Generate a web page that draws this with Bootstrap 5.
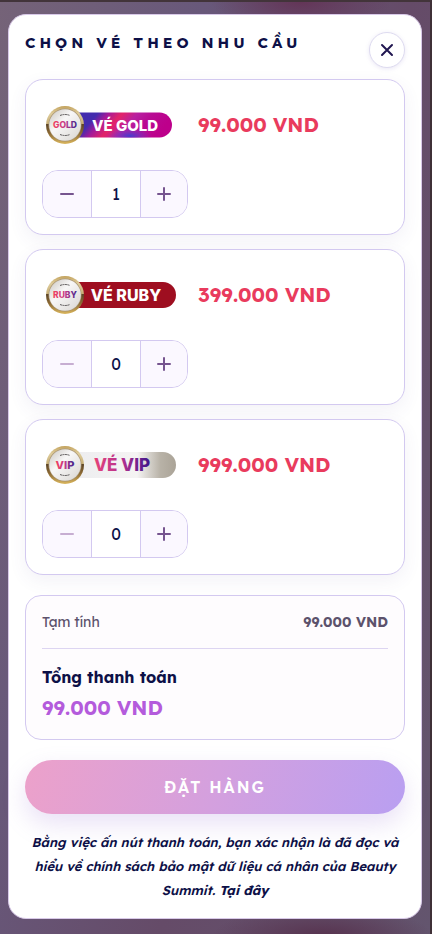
<!DOCTYPE html>
<html lang="vi">
<head>
<meta charset="utf-8">
<meta name="viewport" content="width=device-width, initial-scale=1">
<title>Chọn vé theo nhu cầu</title>
<link href="https://cdn.jsdelivr.net/npm/bootstrap@5.3.0/dist/css/bootstrap.min.css" rel="stylesheet">
<style>
:root { --navy: #0d1047; --line: #d3c9f0; --plum: #76558f; }
body {
  font-family: Lexend, Inter, "Noto Sans", sans-serif; color: var(--navy);
  background: linear-gradient(105deg, #756378 0%, #68587a 30%, #654b68 60%, #63556e 100%);
  border-top: 2px solid #42343a; border-right: 2px solid #3f3037;
}
.backdrop { padding: 12px 8px 15px; background: radial-gradient(ellipse 90px 30px at 70% 0, #633557, transparent), radial-gradient(ellipse 110px 30px at 75% 100%, #57334f, transparent); }
.sheet { background: #fff; border: 1px solid #d8c9e8; border-radius: 18px; padding: 16px; }
.sheet-head { height: 48px; }
.sheet-title { font-size: 15px; line-height: 24px; font-weight: 700; letter-spacing: 4px; }
.close-btn { width: 36px; height: 36px; margin-top: 1px; border: 1px solid #dedbf0; background: #fff; box-shadow: 0 1px 4px #8c78c82e; }
.tickets { gap: 14px; }
.ticket { border: 1px solid var(--line); border-radius: 18px; background: #fff; box-shadow: 0 6px 18px #5a468c12; }
.ticket-art { width: 140px; height: 58px; flex: none; }
.ticket-art text { font-family: Inter, sans-serif; font-weight: 800; text-anchor: middle; }
.price { font-size: 20px; line-height: 28px; font-weight: 700; color: #e93b5d; }
.qty { width: 146px; height: 48px; border: 1px solid var(--line); border-radius: 16px; overflow: hidden; }
.qty button, .qty button:disabled { background: #fbf8ff; color: var(--plum); flex: 1 1 0; opacity: 1; }
.qty button:first-child { flex: 0 0 48px; }
.qty button:disabled { color: #c7aed2; }
.qty svg { display: block; margin: 0 auto; }
.qty input { width: 50px; border: 0; border-left: 1px solid var(--line); border-right: 1px solid var(--line); color: var(--navy); font-size: 16px; background: #fff; }
.summary { margin-top: 20px; border: 1px solid var(--line); border-radius: 16px; background: #fefcfe; padding: 14px 16px 17px; }
.subtotal { font-size: 14px; line-height: 24px; color: #5c526c; padding-bottom: 14px; border-bottom: 1px solid #ddd5f2; }
.total-label { font-size: 16px; line-height: 26px; margin-top: 15px; }
.total-value { font-size: 20px; line-height: 28px; margin-top: 4px; color: #b45bdc; }
.order-btn { height: 54px; margin-top: 20px; color: #fff; font-size: 16px; font-weight: 600; letter-spacing: 2px; background: linear-gradient(105deg, #eca1ca, #d4a0de 50%, #b99ff1); box-shadow: 0 10px 24px #9a78d638; }
.terms { font-size: 13px; line-height: 24px; margin-top: 16px; font-style: italic; font-weight: 600; }
.terms a { color: inherit; font-weight: 700; }
</style>
<script src="https://cdn.jsdelivr.net/npm/bootstrap@5.3.0/dist/js/bootstrap.bundle.min.js"></script>
</head>
<body>
<svg width="0" height="0" class="position-absolute" aria-hidden="true">
  <defs>
    <linearGradient id="rim" x1="0" y1="0" x2="0" y2="1"><stop offset="0" stop-color="#c3a25c"/><stop offset=".2" stop-color="#dfcd9c"/><stop offset=".46" stop-color="#c8b078"/><stop offset=".48" stop-color="#5d4526"/><stop offset=".72" stop-color="#8c6a34"/><stop offset="1" stop-color="#dcb85f"/></linearGradient>
    <linearGradient id="face" x1="0" y1="0" x2="1" y2="1"><stop offset="0" stop-color="#c9c5bf"/><stop offset=".4" stop-color="#f8f7f7"/><stop offset="1" stop-color="#d8d5d1"/></linearGradient>
    <linearGradient id="ink"><stop offset="0" stop-color="#f43f5e"/><stop offset=".5" stop-color="#c4398a"/><stop offset="1" stop-color="#3d238b"/></linearGradient>
    <linearGradient id="vipInk"><stop offset="0" stop-color="#e64379"/><stop offset=".5" stop-color="#b53190"/><stop offset="1" stop-color="#3c168b"/></linearGradient>
    <linearGradient id="goldBar" x2="1" y2=".2"><stop offset=".3" stop-color="#432cae"/><stop offset=".4" stop-color="#a51a98"/><stop offset=".52" stop-color="#e32368"/><stop offset=".66" stop-color="#b820a0"/><stop offset=".8" stop-color="#b80b93"/><stop offset="1" stop-color="#bd008b"/></linearGradient>
    <radialGradient id="goldGlow"><stop offset="0" stop-color="#483acc"/><stop offset="1" stop-color="#783acc" stop-opacity="0"/></radialGradient>
    <clipPath id="goldClip"><path d="M23 16.500h94.500a12.500 12.500 0 0 1 0 25H23z"/></clipPath>
    <linearGradient id="vipBar"><stop offset="0" stop-color="#ececef"/><stop offset=".65" stop-color="#f5f4f3"/><stop offset=".86" stop-color="#b8b2a7"/><stop offset="1" stop-color="#aaa397"/></linearGradient>
    <g id="medal">
      <circle cx="23" cy="29" r="19" fill="url(#rim)"/>
      <circle cx="23" cy="29" r="16.500" fill="#a99574"/>
      <circle cx="23" cy="29" r="15.800" fill="url(#face)"/>
      <path d="M18 19.500q5-2 10 0M18 38.500q5 2 10 0" fill="none" stroke="#4b4748" stroke-width=".9" stroke-dasharray="2 .5"/>
    </g>
  </defs>
</svg>
<div class="backdrop min-vh-100">
<main class="sheet">
  <header class="sheet-head d-flex justify-content-between align-items-start">
    <h1 class="sheet-title text-uppercase mb-0">Chọn vé theo nhu cầu</h1>
    <button type="button" class="close-btn btn rounded-circle p-0 d-flex align-items-center justify-content-center" aria-label="Đóng">
      <svg width="16" height="16" viewBox="0 0 16 16" fill="none" stroke="#211751" stroke-width="2" stroke-linecap="round"><path d="M3 3l10 10M13 3L3 13"/></svg>
    </button>
  </header>

  <div class="tickets d-flex flex-column">
    <section class="ticket p-3">
      <div class="d-flex align-items-center gap-3 mb-3">
        <svg class="ticket-art" viewBox="0 0 140 58" role="img" aria-label="Vé Gold">
          <path d="M23 16.500h94.500a12.500 12.500 0 0 1 0 25H23z" fill="url(#goldBar)"/>
          <ellipse cx="88" cy="40" rx="22" ry="9" fill="url(#goldGlow)" clip-path="url(#goldClip)"/>
          <use href="#medal"/>
          <text x="23" y="32" font-size="8.500" fill="url(#ink)">GOLD</text>
          <text x="83" y="35" font-size="15" fill="#fff">VÉ GOLD</text>
        </svg>
        <div class="price">99.000 VND</div>
      </div>
      <div class="qty d-flex">
        <button type="button" class="btn border-0 rounded-0 p-0" aria-label="Giảm vé Gold"><svg width="16" height="16" viewBox="0 0 16 16" stroke="currentColor" stroke-width="2" stroke-linecap="round"><path d="M2 8h12"/></svg></button>
        <input type="text" inputmode="numeric" class="text-center p-0" value="1" aria-label="Số lượng vé Gold">
        <button type="button" class="btn border-0 rounded-0 p-0" aria-label="Tăng vé Gold"><svg width="16" height="16" viewBox="0 0 16 16" stroke="currentColor" stroke-width="2" stroke-linecap="round"><path d="M2 8h12M8 2v12"/></svg></button>
      </div>
    </section>

    <section class="ticket p-3">
      <div class="d-flex align-items-center gap-3 mb-3">
        <svg class="ticket-art" viewBox="0 0 140 58" role="img" aria-label="Vé Ruby">
          <path d="M23 16h98a13 13 0 0 1 0 26H23z" fill="#9e0e20"/>
          <use href="#medal"/>
          <text x="23" y="32" font-size="8.500" fill="url(#ink)">RUBY</text>
          <text x="84" y="35" font-size="16" fill="#fff">VÉ RUBY</text>
        </svg>
        <div class="price">399.000 VND</div>
      </div>
      <div class="qty d-flex">
        <button type="button" class="btn border-0 rounded-0 p-0" aria-label="Giảm vé Ruby" disabled><svg width="16" height="16" viewBox="0 0 16 16" stroke="currentColor" stroke-width="2" stroke-linecap="round"><path d="M2 8h12"/></svg></button>
        <input type="text" inputmode="numeric" class="text-center p-0" value="0" aria-label="Số lượng vé Ruby">
        <button type="button" class="btn border-0 rounded-0 p-0" aria-label="Tăng vé Ruby"><svg width="16" height="16" viewBox="0 0 16 16" stroke="currentColor" stroke-width="2" stroke-linecap="round"><path d="M2 8h12M8 2v12"/></svg></button>
      </div>
    </section>

    <section class="ticket p-3">
      <div class="d-flex align-items-center gap-3 mb-3">
        <svg class="ticket-art" viewBox="0 0 140 58" role="img" aria-label="Vé VIP">
          <path d="M23 16h98a13 13 0 0 1 0 26H23z" fill="url(#vipBar)"/>
          <use href="#medal"/>
          <text x="23" y="33" font-size="11" fill="url(#ink)">VIP</text>
          <text x="80" y="35" font-size="17" fill="url(#vipInk)">VÉ VIP</text>
        </svg>
        <div class="price">999.000 VND</div>
      </div>
      <div class="qty d-flex">
        <button type="button" class="btn border-0 rounded-0 p-0" aria-label="Giảm vé VIP" disabled><svg width="16" height="16" viewBox="0 0 16 16" stroke="currentColor" stroke-width="2" stroke-linecap="round"><path d="M2 8h12"/></svg></button>
        <input type="text" inputmode="numeric" class="text-center p-0" value="0" aria-label="Số lượng vé VIP">
        <button type="button" class="btn border-0 rounded-0 p-0" aria-label="Tăng vé VIP"><svg width="16" height="16" viewBox="0 0 16 16" stroke="currentColor" stroke-width="2" stroke-linecap="round"><path d="M2 8h12M8 2v12"/></svg></button>
      </div>
    </section>
  </div>

  <section class="summary">
    <div class="subtotal d-flex justify-content-between"><span>Tạm tính</span><strong>99.000 VND</strong></div>
    <div class="total-label fw-bold">Tổng thanh toán</div>
    <div class="total-value fw-bold">99.000 VND</div>
  </section>

  <button type="button" class="order-btn btn w-100 border-0 rounded-pill text-uppercase">Đặt hàng</button>
  <p class="terms text-center mb-0">Bằng việc ấn nút thanh toán, bạn xác nhận là đã đọc và hiểu về chính sách bảo mật dữ liệu cá nhân của Beauty Summit. <a href="#" class="text-decoration-none">Tại đây</a></p>
</main>
</div>
</body>
</html>
